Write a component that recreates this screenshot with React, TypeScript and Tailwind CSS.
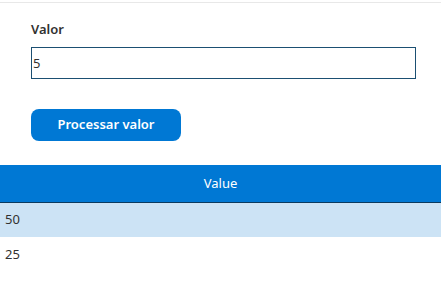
import React, { useState } from "react";

export default function App() {
  const [valor, setValor] = useState("5");
  const rows = ["50", "25"];

  return (
    <div className="min-h-screen w-[441px] bg-white font-['Noto_Sans',sans-serif] text-[#323130]">
      <div className="h-[2px]" />
      <div className="border-t border-[#e8e8e8]" />
      <div className="px-[31px] pt-[17px]">
        <label className="block text-[13px] font-semibold leading-[18px] text-[#323130]">
          Valor
        </label>
        <input
          value={valor}
          onChange={(e) => setValor(e.target.value)}
          className="mt-[9px] block h-[32px] w-[385px] border border-[#1b4f72] px-[1px] text-[13px] text-[#323130] outline-none"
        />
        <button className="mt-[30px] h-[32px] w-[150px] rounded-[8px] bg-[#0078d4] text-[13px] font-semibold text-white">
          Processar valor
        </button>
      </div>
      <table className="mt-[24px] w-full border-collapse text-[13px]">
        <thead>
          <tr className="h-[37px] border-b border-[#0b3a5e] bg-[#0078d4]">
            <th className="font-normal text-white">Value</th>
          </tr>
        </thead>
        <tbody>
          {rows.map((r, i) => (
            <tr key={r} className={i % 2 === 0 ? "h-[35px] bg-[#cce3f5]" : "h-[35px] bg-white"}>
              <td className="px-[5px] text-left">{r}</td>
            </tr>
          ))}
        </tbody>
      </table>
    </div>
  );
}
